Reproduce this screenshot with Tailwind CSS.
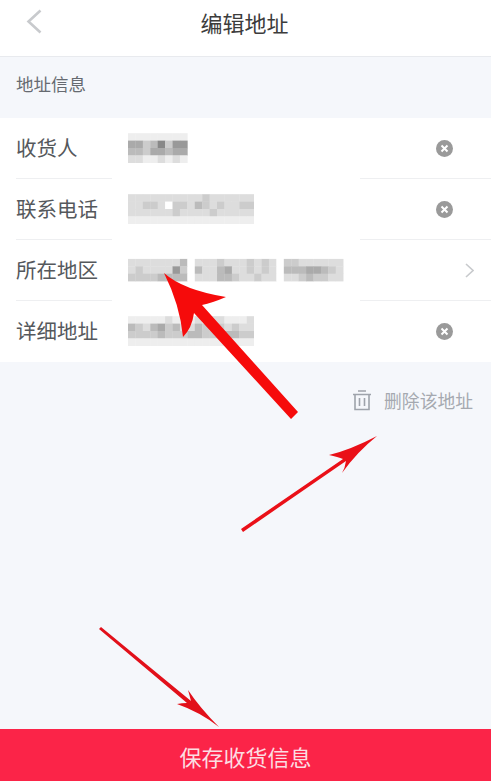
<!DOCTYPE html>
<html lang="zh-CN">
<head>
  <meta charset="UTF-8" />
  <meta name="viewport" content="width=device-width, initial-scale=1.0"/>
  <title>编辑地址</title>
  <script src="https://cdn.jsdelivr.net/npm/@tailwindcss/browser@4"></script>
</head>
<body class="relative flex flex-col h-[781px] overflow-hidden bg-[#f5f7fb] font-['Noto_Sans_CJK_SC',sans-serif]">

  <!-- header -->
  <header class="relative flex items-center justify-center h-[57px] shrink-0 bg-white border-b border-[#e8eaee] pb-[13px]">
    <svg class="absolute left-[26px] top-[9px]" width="17" height="25" viewBox="0 0 17 25" fill="none" stroke="#c8cacd" stroke-width="2.6">
      <path d="M14.5 1.5 L2.5 12.5 L14.5 23.5"/>
    </svg>
    <h1 class="text-[22px] leading-none text-[#3c3c3c] -ml-[2px]">编辑地址</h1>
  </header>

  <div class="flex items-center h-[61px] shrink-0 pl-4 pb-[6px] text-[17.5px] text-[#666a70]">地址信息</div>

  <!-- form rows -->
  <section class="bg-white shrink-0 h-[244px] text-[20.5px] text-[#55585c]">
    <div class="flex items-center h-[60px] pl-4">
      <span class="w-[112px] -mt-[2px]">收货人</span>
      <svg data-rows="eeeeeeee,aacb8c99,bbcaabaa,ddeedede" width="60" height="30" class="blur-[0.5px]"></svg>
      <svg class="ml-auto mr-[38px]" width="17" height="17" viewBox="0 0 17 17"><circle cx="8.5" cy="8.5" r="8.5" fill="#9a9a9a"/><path d="M5.5 5.5 L11.5 11.5 M11.5 5.5 L5.5 11.5" stroke="#fff" stroke-width="2"/></svg>
    </div>
    <div class="flex h-px"><div class="ml-4 w-[96px] bg-[#eeeff1]"></div><div class="ml-auto w-[131px] bg-[#eeeff1]"></div></div>

    <div class="flex items-center h-[60px] pl-4">
      <span class="w-[112px] -mt-[2px]">联系电话</span>
      <svg data-rows="ddddddddddcddddddd,ddccdfccdbcdcddcc,ddddddcddddcddddd,eeeeeeeeeeeeeeeee" width="126" height="30" class="blur-[0.5px]"></svg>
      <svg class="ml-auto mr-[38px]" width="17" height="17" viewBox="0 0 17 17"><circle cx="8.5" cy="8.5" r="8.5" fill="#9a9a9a"/><path d="M5.5 5.5 L11.5 11.5 M11.5 5.5 L5.5 11.5" stroke="#fff" stroke-width="2"/></svg>
    </div>
    <div class="flex h-px"><div class="ml-4 w-[96px] bg-[#eeeff1]"></div><div class="ml-auto w-[131px] bg-[#eeeff1]"></div></div>

    <div class="flex items-center h-[60px] pl-4">
      <span class="w-[112px] -mt-[2px]">所在地区</span>
      <svg data-rows="dddddddbfdddcdddcdcdfccdddddd,dcdddd9cfbddbaddcdcdfbbbaabcd,ccccbbbbfdddbbcddcddfddcbccdd" width="216" height="30" class="blur-[0.5px]"></svg>
      <svg class="ml-auto mr-[17px]" width="9" height="15" viewBox="0 0 9 15" fill="none" stroke="#c8cacd" stroke-width="1.6"><path d="M1 1 L8 7.5 L1 14"/></svg>
    </div>
    <div class="flex h-px"><div class="ml-4 w-[96px] bg-[#eeeff1]"></div><div class="ml-auto w-[131px] bg-[#eeeff1]"></div></div>

    <div class="flex items-center h-[60px] pl-4">
      <span class="w-[112px] -mt-[2px]">详细地址</span>
      <svg data-rows="eeeeedeeededdeeed,bcdbacbddbcdcdcdd,ccccbcccbbcccbbcc,eeeeeeeeeeeeeeeee" width="126" height="30" class="blur-[0.5px]"></svg>
      <svg class="ml-auto mr-[38px]" width="17" height="17" viewBox="0 0 17 17"><circle cx="8.5" cy="8.5" r="8.5" fill="#9a9a9a"/><path d="M5.5 5.5 L11.5 11.5 M11.5 5.5 L5.5 11.5" stroke="#fff" stroke-width="2"/></svg>
    </div>
  </section>

  <!-- delete -->
  <div class="flex items-center justify-end gap-[12px] h-[78px] shrink-0 pr-[18px] pb-[1px] text-[17.8px] leading-none text-[#a5a9b0]">
    <svg width="20" height="21" viewBox="0 0 20 21" fill="none" stroke="#9ea3ab" stroke-width="1.6">
      <path d="M6 1 H14 M1 4.5 H19 M3 4.5 V19.5 H17 V4.5 M7.5 8 V16 M12.5 8 V16"/>
    </svg>
    <span>删除该地址</span>
  </div>

  <div class="flex-1"></div>

  <!-- save button -->
  <button class="flex items-center justify-center h-[52px] shrink-0 bg-[#fb2448] pt-[2px] text-[22px] leading-none text-[#fbdde2]">保存收货信息</button>

  <!-- red annotation arrows over the page -->
  <svg class="absolute inset-0 pointer-events-none" width="491" height="781" viewBox="0 0 491 781">
    <path fill="#f60b0b" d="M164 273 Q183 290 226 297 Q212 303 202 305 L298 412 L291 419 L194 313 Q192 328 183 337 Q180 305 164 273 Z"/>
    <path fill="#ea1018" d="M377 436 Q350 450 329 455 Q338 457 343 459 L241 529 L243 532 L346 461 Q345 468 342 473 Q357 452 377 436 Z"/>
    <path fill="#e2101a" d="M219 727 Q200 708 188 690 Q190 697 191 701 L101 627 L99 629 L187 703 Q182 703 177 704 Q200 712 219 727 Z"/>
  </svg>

  <script>
    // blurred-out values: each string is a row of mosaic cells, one hex digit of grey per cell
    document.querySelectorAll('[data-rows]').forEach((svg) => {
      const rows = svg.dataset.rows.split(',');
      const cell = 7.42;
      const h = 7.4;
      const top = (30 - rows.length * h) / 2;
      let out = '';
      rows.forEach((row, r) => {
        [...row].slice(0, 29).forEach((c, i) => {
          out += `<rect x="${i * cell}" y="${top + r * h}" width="${cell + 0.3}" height="${h + 0.3}" fill="#${c}${c}${c}"/>`;
        });
      });
      svg.innerHTML = out;
    });
  </script>
</body>
</html>
